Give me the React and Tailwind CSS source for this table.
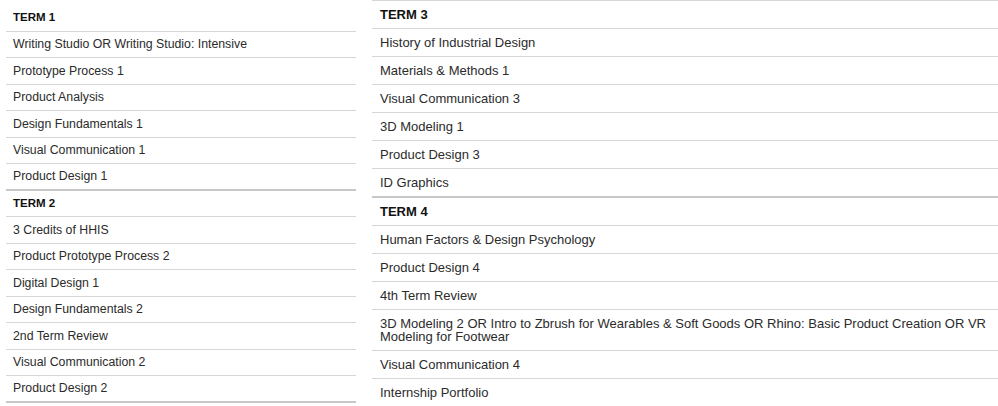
const terms = [
  {
    title: 'TERM 1',
    courses: [
      'Writing Studio OR Writing Studio: Intensive',
      'Prototype Process 1',
      'Product Analysis',
      'Design Fundamentals 1',
      'Visual Communication 1',
      'Product Design 1',
    ],
  },
  {
    title: 'TERM 2',
    courses: [
      '3 Credits of HHIS',
      'Product Prototype Process 2',
      'Digital Design 1',
      'Design Fundamentals 2',
      '2nd Term Review',
      'Visual Communication 2',
      'Product Design 2',
    ],
  },
  {
    title: 'TERM 3',
    courses: [
      'History of Industrial Design',
      'Materials & Methods 1',
      'Visual Communication 3',
      '3D Modeling 1',
      'Product Design 3',
      'ID Graphics',
    ],
  },
  {
    title: 'TERM 4',
    courses: [
      'Human Factors & Design Psychology',
      'Product Design 4',
      '4th Term Review',
      '3D Modeling 2 OR Intro to Zbrush for Wearables & Soft Goods OR Rhino: Basic Product Creation OR VR Modeling for Footwear',
      'Visual Communication 4',
      'Internship Portfolio',
    ],
  },
];

// 左カラム: 12px / 行高 26.5px
function LeftTerm({ term }) {
  return (
    <div>
      <div className="h-[26.5px] flex items-center px-[7px] border-b border-[#d6d6d6] text-[11.5px] font-bold text-[#111]">
        {term.title}
      </div>
      {term.courses.map((c, i) => (
        <div
          key={c}
          className={`h-[26.5px] flex items-center px-[7px] text-[12.3px] text-[#2b2b2b] ${
            i === term.courses.length - 1 ? 'border-b-2 border-[#c8c8c8]' : 'border-b border-[#d6d6d6]'
          }`}
        >
          {c}
        </div>
      ))}
    </div>
  );
}

// 右カラム: 13px / 行高 28px
function RightTerm({ term }) {
  return (
    <div>
      <div className="h-[28px] flex items-center px-[8px] border-b border-[#d6d6d6] text-[13px] font-bold text-[#111]">
        {term.title}
      </div>
      {term.courses.map((c, i) => (
        <div
          key={c}
          className={`min-h-[28px] flex items-center px-[8px] py-[7px] text-[13px] leading-[13px] text-[#2b2b2b] ${
            i === term.courses.length - 1 ? 'border-b-2 border-[#c8c8c8]' : 'border-b border-[#d6d6d6]'
          }`}
        >
          {c}
        </div>
      ))}
    </div>
  );
}

export default function App() {
  return (
    <div
      className="w-[998px] h-[406px] bg-white overflow-hidden flex"
      style={{ fontFamily: '"Liberation Sans", Arial, sans-serif' }}
    >
      <div className="w-[350px] ml-[6px] pt-[5px]">
        <LeftTerm term={terms[0]} />
        <LeftTerm term={terms[1]} />
      </div>
      <div className="flex-1 ml-[16px] border-t border-[#d6d6d6]">
        <RightTerm term={terms[2]} />
        <RightTerm term={terms[3]} />
      </div>
    </div>
  );
}
